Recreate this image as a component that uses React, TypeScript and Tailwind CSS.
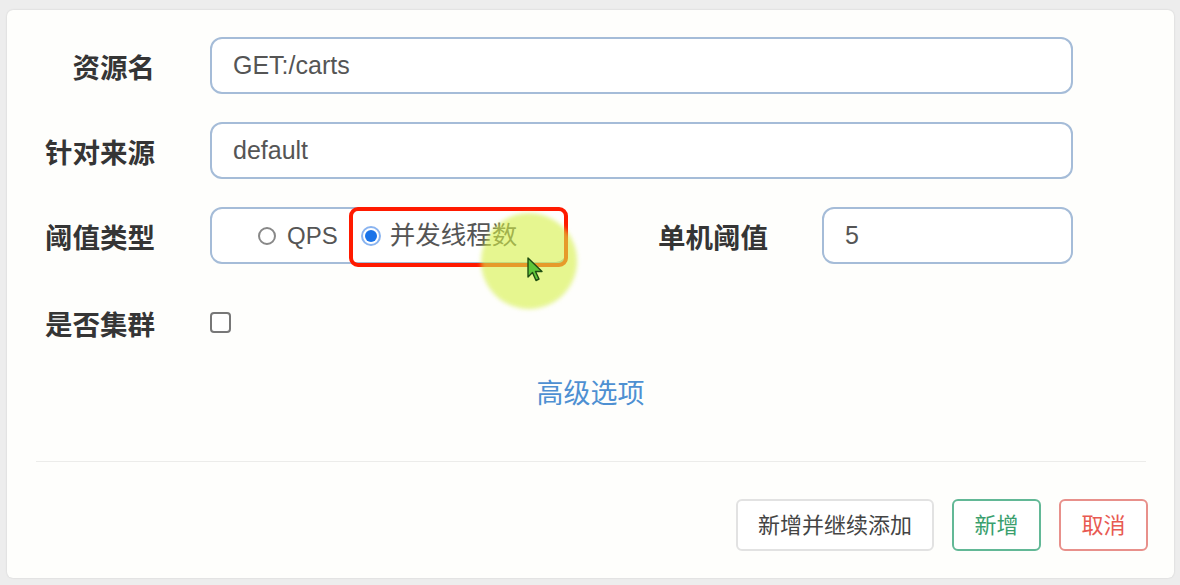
import React from "react";

const labelCls =
  "text-[27.5px] font-bold text-[#353535] text-right leading-none whitespace-nowrap translate-y-[3px]";
const inputCls =
  "h-[57px] rounded-xl border-2 border-[#a5bcd8] bg-white flex items-center px-[21px] text-[25px] text-[#555555]";

const FormRow = ({
  label,
  children,
  className = "",
}: {
  label: string;
  children: React.ReactNode;
  className?: string;
}) => (
  <div className={`flex items-center ${className}`}>
    <div className={`w-[148px] ${labelCls}`}>{label}</div>
    <div className="ml-[55px] flex-1 flex items-center">{children}</div>
  </div>
);

const App = () => {
  return (
    <div
      className="w-[1180px] h-[585px] bg-[#ededed] pl-[7px] pt-[10px] pr-[6px] pb-[7px]"
      style={{ fontFamily: '"Liberation Sans", "Noto Sans CJK SC", sans-serif' }}
    >
      <div className="relative h-full bg-[#fefefc] rounded-md shadow-[0_0_2px_rgba(0,0,0,0.15)] flex flex-col">
        <div className="pt-[27px] pr-[101px] flex flex-col gap-[28px]">
          <FormRow label="资源名">
            <div className={`${inputCls} w-full`}>GET:/carts</div>
          </FormRow>

          <FormRow label="针对来源">
            <div className={`${inputCls} w-full`}>default</div>
          </FormRow>

          <FormRow label="阈值类型">
            <div className="relative w-[358px] h-[57px] rounded-xl border-2 border-[#a5bcd8] bg-white flex items-center pl-[46px] text-[24px] text-[#555555]">
              <span className="w-[18px] h-[18px] rounded-full border-2 border-[#888888] bg-white" />
              <span className="ml-[11px] leading-none">QPS</span>
              <span className="ml-[23px] w-[20px] h-[20px] rounded-full border-2 border-[#8ab4f0] bg-white flex items-center justify-center">
                <span className="w-[12px] h-[12px] rounded-full bg-[#1a73e8]" />
              </span>
              <span className="ml-[9px] leading-none text-[25.5px]">并发线程数</span>
            </div>
            <div className={`w-[200px] ${labelCls}`}>单机阈值</div>
            <div className={`${inputCls} ml-[54px] w-[251px]`}>5</div>
          </FormRow>

          <FormRow label="是否集群" className="mt-[2px]">
            <div className="h-[57px] flex items-center">
              <span className="w-[21px] h-[21px] rounded-[4px] border-2 border-[#777777] bg-white" />
            </div>
          </FormRow>
        </div>

        <div className="mt-[25px] text-center text-[27px] leading-[36px] text-[#4e90d2]">
          高级选项
        </div>

        <div className="mt-[49px] ml-[29px] mr-[28px] h-px bg-[#ececea]" />

        <div className="mt-[37px] mr-[26px] flex justify-end gap-[18px] text-[22px]">
          <button className="w-[198px] h-[52px] rounded-md border-2 border-[#e2e2e2] bg-white text-[#444444]">
            新增并继续添加
          </button>
          <button className="w-[89px] h-[52px] rounded-md border-2 border-[#62b896] bg-white text-[#3a9f6e]">
            新增
          </button>
          <button className="w-[89px] h-[52px] rounded-md border-2 border-[#e8908b] bg-white text-[#e85a52]">
            取消
          </button>
        </div>

        {/* red highlight annotation */}
        <div className="absolute left-[342px] top-[197px] w-[219px] h-[60px] rounded-[9px] border-[4px] border-[#ff1a00]" />
        {/* cursor halo */}
        <div className="absolute left-[474px] top-[203px] w-[96px] h-[96px] rounded-full bg-[rgba(214,240,70,0.6)] blur-[2px]" />
        {/* cursor */}
        <svg
          className="absolute left-[520px] top-[247px]"
          width="18"
          height="26"
          viewBox="0 0 18 26"
        >
          <path
            d="M1 1 L1 20 L5.5 15.5 L9 23.5 L12 22 L8.5 14.5 L15 14.5 Z"
            fill="#5ec63a"
            stroke="#1f4d12"
            strokeWidth="1.4"
            strokeLinejoin="round"
          />
        </svg>
      </div>
    </div>
  );
};

export default App;
